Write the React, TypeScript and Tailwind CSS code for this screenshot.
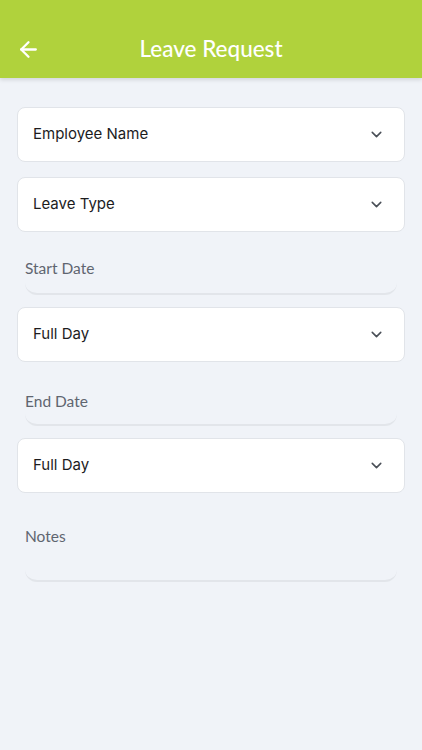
import { FC } from 'react';
import { ArrowLeft, ChevronDown } from 'lucide-react';

const SelectBox: FC<{ label: string }> = ({ label }) => (
  <div className="flex h-[55px] items-center justify-between rounded-lg border-[1.5px] border-[#e1e4e9] bg-white pl-[15px] pr-[19px]">
    <span className="text-[15px] text-[#1c1c1e]">{label}</span>
    <ChevronDown size={17} strokeWidth={2.2} className="text-[#4a4f57]" />
  </div>
);

const LineField: FC<{ label: string; height: string }> = ({ label, height }) => (
  <div
    className={`mx-2 flex items-start rounded-b-xl border-b-2 border-[#e2e5ea] ${height}`}
  >
    <span className="text-[15.5px] text-[#5f6570]" style={{ fontFamily: 'Lato, sans-serif' }}>
      {label}
    </span>
  </div>
);

export default function App() {
  return (
    <div
      className="flex min-h-[750px] flex-col bg-[#f0f3f8]"
      style={{ fontFamily: 'Inter, "Noto Sans", sans-serif' }}
    >
      <header className="relative flex h-[78px] items-end justify-center bg-[#b0d23c] pb-[12px] shadow-[0_2px_4px_rgba(0,0,0,0.12)]">
        <ArrowLeft
          size={25}
          strokeWidth={2.2}
          className="absolute bottom-[16px] left-[16px] text-white"
        />
        <h1
          className="text-[22.5px] font-medium text-white"
          style={{ fontFamily: 'Lato, sans-serif' }}
        >
          Leave Request
        </h1>
      </header>

      <main className="flex flex-col px-[17px] pt-[29px]">
        <SelectBox label="Employee Name" />
        <div className="h-[15px]" />
        <SelectBox label="Leave Type" />
        <div className="h-[25px]" />
        <LineField label="Start Date" height="h-[38px]" />
        <div className="h-[12px]" />
        <SelectBox label="Full Day" />
        <div className="h-[28px]" />
        <LineField label="End Date" height="h-[36px]" />
        <div className="h-[12px]" />
        <SelectBox label="Full Day" />
        <div className="h-[32px]" />
        <LineField label="Notes" height="h-[57px]" />
      </main>
    </div>
  );
}
